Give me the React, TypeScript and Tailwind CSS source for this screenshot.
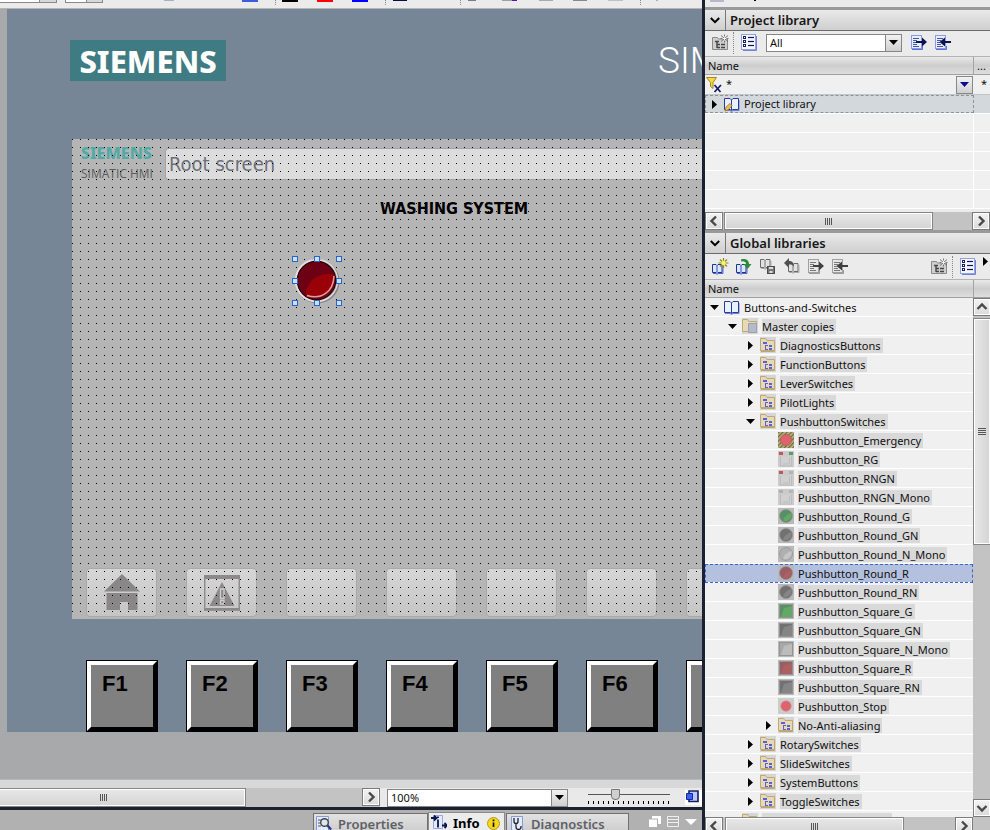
import type { ReactNode } from "react";

type Dir = "left" | "right" | "up" | "down";

function ChevronIcon({ dir }: { dir: Dir }) {
  const d = {
    left: "M10 3.500 5.500 8l4.500 4.500",
    right: "M6 3.500 10.500 8 6 12.500",
    up: "M3.500 10 8 5.500l4.500 4.500",
    down: "M3.500 6 8 10.500 12.500 6",
  }[dir];
  return (
    <svg viewBox="0 0 16 16" className="h-4 w-4" fill="none" stroke="#484848" strokeWidth="2.4">
      <path d={d} />
    </svg>
  );
}

function ScrollButton({ dir }: { dir: Dir }) {
  return (
    <button
      aria-label={`Scroll ${dir}`}
      className="flex h-[18px] w-[18px] shrink-0 items-center justify-center border border-[#7c7c7c] bg-gradient-to-b from-[#f4f4f4] to-[#dadada] shadow-[inset_0_0_0_1px_#fff]"
    >
      <ChevronIcon dir={dir} />
    </button>
  );
}

function Thumb({ className }: { className: string }) {
  return (
    <div
      className={`flex shrink-0 items-center justify-center gap-px border border-[#868686] bg-gradient-to-b from-[#e8e8e8] to-[#d4d4d4] shadow-[inset_0_0_0_1px_#fff] ${className}`}
    >
      {[0, 1, 2, 3].map((i) => (
        <span key={i} className="h-[7px] w-px bg-[#555]" />
      ))}
    </div>
  );
}

function Triangle({ dir, color = "#000" }: { dir: "right" | "down"; color?: string }) {
  return dir === "right" ? (
    <svg width="5" height="9" viewBox="0 0 5 9">
      <path d="M0 0l5 4.500-5 4.500z" fill={color} />
    </svg>
  ) : (
    <svg width="9" height="5" viewBox="0 0 9 5">
      <path d="M0 0h9L4.500 5z" fill={color} />
    </svg>
  );
}

function BookIcon({ children }: { children?: ReactNode }) {
  return (
    <svg width="16" height="16" viewBox="1 0 16 16">
      <path d="M2 14.500h5l1.500 1 1.500-1h6V4" fill="none" stroke="#6f84d6" />
      <path d="M1.500 2.500H7L8.500 4 10 2.500h5.500v11H10L8.500 14.500 7 13.500H1.500z" fill="#e8f1ff" stroke="#2a3a9c" />
      <path d="M8.500 4v10" stroke="#2a3a9c" />
      {children}
    </svg>
  );
}

function SmallBook({ gray, x = 1, y = 5 }: { gray?: boolean; x?: number; y?: number }) {
  return (
    <g transform={`translate(${x} ${y})`}>
      <path
        d="M.5 1.500H4L5 2.500 6 1.500h4v8H6l-1 1-1-1H.5z"
        fill={gray ? "#e2e2e2" : "#d8e8ff"}
        stroke={gray ? "#6a6a6a" : "#22308f"}
      />
      <path d="M5 2.500v7" stroke={gray ? "#777" : "#3b4bb0"} />
      <path d="M1 10.500h3l1 1 1-1h5V3" fill="none" stroke={gray ? "#aaa" : "#5566cc"} />
    </g>
  );
}

function NewFolderIcon() {
  return (
    <svg width="17" height="17" viewBox="0 0 17 17">
      <path d="M.5 15.500v-12h5l1 1.500h9v10.500z" fill="#cfcfcf" stroke="#8a8a8a" />
      <path d="M3 7.500h4M5 8v6M5 10.500h3M5 13.500h3M9 10.500h4M9 13.500h4" stroke="#444" strokeWidth="1.400" />
      <path d="M12.500.5v8M9 1.500l7 6M16 1.500l-7 6M8.500 4.500h8" stroke="#6b6b6b" strokeWidth=".9" />
      <path d="M12.500 2.500v4M10.500 4.500h4" stroke="#f4f4f4" />
    </svg>
  );
}

function ListIcon() {
  return (
    <svg width="16" height="17" viewBox="0 0 16 17">
      <rect x=".5" y=".5" width="14" height="15" fill="#f3f6ff" stroke="#93a2dc" />
      <path d="M2 16.500h13.500V2" fill="none" stroke="#6f83d8" />
      {[3, 7, 11].map((y) => (
        <g key={y}>
          <rect x="2.500" y={y - 0.5} width="2" height="2" fill="#fff" stroke="#1b1f5e" />
          <path d={`M7 ${y + 0.5}h6`} stroke="#10154e" strokeWidth="1.200" />
        </g>
      ))}
    </svg>
  );
}

function PageArrowIcon({ dir, gray }: { dir: "left" | "right"; gray?: boolean }) {
  const a = gray ? "#404040" : "#0c1450";
  return (
    <svg width="17" height="16" viewBox="0 0 17 16">
      <rect x="1.500" y=".5" width="10" height="13" fill={gray ? "#e6e6e6" : "#e6eeff"} stroke={gray ? "#a0a0a0" : "#8a9be0"} />
      <path d="M2 14.500h10.500V11" fill="none" stroke={gray ? "#999" : "#5d72d4"} />
      <path d="M3 3.500h6M3 5.500h4M3 7.500h3M3 9.500h4M3 11.500h6" stroke={gray ? "#777" : "#4553a8"} />
      {dir === "right" ? (
        <path d="M6 6h6V2.500L17 7l-5 4.500V8H6z" fill={a} />
      ) : (
        <path d="M17 6h-6V2.500L5.500 7l5.500 4.500V8h6z" fill={a} />
      )}
    </svg>
  );
}

function IconButton({ label, className = "", children }: { label: string; className?: string; children: ReactNode }) {
  return (
    <button aria-label={label} className={`shrink-0 ${className}`}>
      {children}
    </button>
  );
}

function SectionHeader({ title }: { title: string }) {
  return (
    <div className="flex h-6 shrink-0 items-center border-t-3 border-b border-t-[#9a9a9a] border-b-[#6c6c6c] bg-gradient-to-b from-[#e9e9e9] to-[#cfcfcf]">
      <button aria-label={`Collapse ${title}`} className="flex h-5 w-[21px] items-center justify-center border-r border-[#777]">
        <svg width="10" height="7" viewBox="0 0 10 7" fill="none" stroke="#000" strokeWidth="2">
          <path d="M.8 1 5 5.200 9.200 1" />
        </svg>
      </button>
      <h2 className="pl-1 text-[13px] leading-5 font-semibold text-[#161616]">{title}</h2>
    </div>
  );
}

function ColumnHeader({ more }: { more?: string }) {
  return (
    <div className="flex h-[19px] shrink-0 border-t border-b border-t-[#b4b4b4] border-b-[#a0a0a0] bg-gradient-to-b from-[#e9e9e9] via-[#cdcdcd] to-[#dedede] leading-[18px]">
      <span className="flex-1 border-r border-[#a4a4a4] pl-[3px]">Name</span>
      <span className="w-4 pl-[3px]">{more}</span>
    </div>
  );
}

function FolderIcon({ master }: { master?: boolean }) {
  return (
    <svg width="16" height="16" viewBox="0 0 16 16" className="bg-[#d6d6d6]">
      <path d="M.5 13.500V1.500h5l1.500 2h7.500v10z" fill="#e6d9b4" stroke="#bda878" />
      {master ? (
        <path d="M6.500 5.500h8v9h-8z" fill="#b5b9c8" stroke="#9aa0b4" />
      ) : (
        <>
          <path d="M14.500 4v10.500H1" fill="none" stroke="#bfa66a" />
          <path d="M3 5h4v2H3zM9 8h3v2H9zM9 11h3v2H9zM5 8h3v1H5zM5 8h1v5H5zM5 12h3v1H5z" fill="#5a5fe0" />
        </>
      )}
    </svg>
  );
}

type IconKind = "emergency" | "rg" | "rngn" | "mono" | "round" | "square" | "stop";

function SwitchIcon({ kind, a = "#777", b = "#999" }: { kind: IconKind; a?: string; b?: string }) {
  if (kind === "emergency")
    return (
      <svg width="16" height="16" viewBox="0 0 16 16">
        <defs>
          <pattern id="hazard" width="3" height="3" patternUnits="userSpaceOnUse" patternTransform="rotate(45)">
            <rect width="3" height="3" fill="#bdb87c" />
            <rect width="1.300" height="3" fill="#6c6a4c" />
          </pattern>
        </defs>
        <rect width="16" height="16" fill="url(#hazard)" />
        <circle cx="8" cy="8" r="5.500" fill="#e0626c" stroke="#b8625c" />
      </svg>
    );
  if (kind === "stop")
    return (
      <svg width="16" height="16" viewBox="0 0 16 16">
        <rect width="16" height="16" fill="#cccccc" />
        <circle cx="8" cy="8" r="5.300" fill="#e0626c" stroke="#c8a0a2" strokeWidth=".6" />
      </svg>
    );
  if (kind === "round")
    return (
      <svg width="16" height="16" viewBox="0 0 16 16">
        <rect width="16" height="16" fill="#b9b9b9" />
        <circle cx="8" cy="8" r="6.500" fill={a} stroke="#959595" strokeWidth=".8" />
        <path d="M13.500 5c1 5-3 9-8 8-1-3 4-7 8-8z" fill={b} />
      </svg>
    );
  if (kind === "square")
    return (
      <svg width="16" height="16" viewBox="0 0 16 16">
        <rect width="16" height="16" fill="#b9b9b9" />
        <rect x="1.500" y="1.500" width="13" height="13" fill={a} stroke="#949494" />
        <path d="M6 5l8-2v11H3z" fill={b} />
      </svg>
    );
  return (
    <svg width="16" height="16" viewBox="0 0 16 16">
      <rect width="16" height="16" fill="#cbcbcb" />
      <path d="M2.500 5.500v9.500h11V5.500" fill="#d0d0d0" stroke="#bcbcbc" />
      <path d="M11.500 7v6H5" fill="none" stroke="#bdbdbd" />
      <rect x="1" y="1" width="4" height="3" fill={kind === "mono" ? "#aeaeae" : "#c2555c"} />
      <rect x="11" y="1" width="4" height="3" fill={kind === "rg" ? "#5a9e60" : "#b4b4b4"} />
    </svg>
  );
}

type Node = { level: number; label: string; icon: ReactNode; open?: boolean; selected?: boolean; plain?: boolean };

const folder = <FolderIcon />;
const tree: Node[] = [
  { level: 0, label: "Buttons-and-Switches", icon: <BookIcon />, open: true, plain: true },
  { level: 1, label: "Master copies", icon: <FolderIcon master />, open: true },
  { level: 2, label: "DiagnosticsButtons", icon: folder, open: false },
  { level: 2, label: "FunctionButtons", icon: folder, open: false },
  { level: 2, label: "LeverSwitches", icon: folder, open: false },
  { level: 2, label: "PilotLights", icon: folder, open: false },
  { level: 2, label: "PushbuttonSwitches", icon: folder, open: true },
  { level: 3, label: "Pushbutton_Emergency", icon: <SwitchIcon kind="emergency" /> },
  { level: 3, label: "Pushbutton_RG", icon: <SwitchIcon kind="rg" /> },
  { level: 3, label: "Pushbutton_RNGN", icon: <SwitchIcon kind="rngn" /> },
  { level: 3, label: "Pushbutton_RNGN_Mono", icon: <SwitchIcon kind="mono" /> },
  { level: 3, label: "Pushbutton_Round_G", icon: <SwitchIcon kind="round" a="#588f66" b="#63a965" /> },
  { level: 3, label: "Pushbutton_Round_GN", icon: <SwitchIcon kind="round" a="#717171" b="#858585" /> },
  { level: 3, label: "Pushbutton_Round_N_Mono", icon: <SwitchIcon kind="round" a="#b0b0b0" b="#c6c6c6" /> },
  { level: 3, label: "Pushbutton_Round_R", icon: <SwitchIcon kind="round" a="#9a5c66" b="#ab6062" />, selected: true },
  { level: 3, label: "Pushbutton_Round_RN", icon: <SwitchIcon kind="round" a="#717171" b="#858585" /> },
  { level: 3, label: "Pushbutton_Square_G", icon: <SwitchIcon kind="square" a="#588f66" b="#63a965" /> },
  { level: 3, label: "Pushbutton_Square_GN", icon: <SwitchIcon kind="square" a="#717171" b="#858585" /> },
  { level: 3, label: "Pushbutton_Square_N_Mono", icon: <SwitchIcon kind="square" a="#a8a8a8" b="#bcbcbc" /> },
  { level: 3, label: "Pushbutton_Square_R", icon: <SwitchIcon kind="square" a="#9a5c66" b="#ab6062" /> },
  { level: 3, label: "Pushbutton_Square_RN", icon: <SwitchIcon kind="square" a="#717171" b="#858585" /> },
  { level: 3, label: "Pushbutton_Stop", icon: <SwitchIcon kind="stop" /> },
  { level: 3, label: "No-Anti-aliasing", icon: folder, open: false },
  { level: 2, label: "RotarySwitches", icon: folder, open: false },
  { level: 2, label: "SlideSwitches", icon: folder, open: false },
  { level: 2, label: "SystemButtons", icon: folder, open: false },
  { level: 2, label: "ToggleSwitches", icon: folder, open: false },
];

const indent = ["pl-0", "pl-[18px]", "pl-[36px]", "pl-[54px]"];

function TreeRow({ node }: { node: Node }) {
  return (
    <li
      role="treeitem"
      aria-selected={!!node.selected}
      className={`flex h-[19px] items-center border-b border-white ${node.selected ? "bg-[#b4c1de] outline-1 -outline-offset-1 outline-dashed outline-[#3b66c8]" : ""} ${indent[node.level]}`}
    >
      {node.open === undefined ? (
        <span className="w-[19px] shrink-0" />
      ) : (
        <button aria-label={`Toggle ${node.label}`} className="flex w-[19px] shrink-0 justify-center">
          <Triangle dir={node.open ? "down" : "right"} />
        </button>
      )}
      <span className="w-4 shrink-0">{node.icon}</span>
      <span className={`ml-1 pr-0.5 leading-[15px] whitespace-nowrap ${node.plain || node.selected ? "" : "bg-[#d9d9d9]"}`}>{node.label}</span>
    </li>
  );
}

function ProjectLibrary() {
  return (
    <section className="flex shrink-0 flex-col">
      <SectionHeader title="Project library" />
      <div className="flex h-[25px] shrink-0 items-center bg-[#ebebeb] pb-0.5 pl-[7px]">
        <IconButton label="Add new folder"><NewFolderIcon /></IconButton>
        <span className="mx-1 h-[22px] border-l border-dotted border-[#888]" />
        <IconButton label="Show list" className="ml-[3px]"><ListIcon /></IconButton>
        <div className="relative ml-[9px] h-[18px] w-[136px]">
          <select aria-label="Filter types" className="block h-[18px] w-full appearance-none border border-[#868686] bg-white pl-[3px] text-[11px] leading-4">
            <option>All</option>
          </select>
          <span className="pointer-events-none absolute inset-y-px right-px flex w-4 items-center justify-center border-l border-[#868686] bg-gradient-to-b from-[#f2f2f2] to-[#cfcfcf]">
            <Triangle dir="down" />
          </span>
        </div>
        <IconButton label="Export" className="ml-2"><PageArrowIcon dir="right" /></IconButton>
        <IconButton label="Import" className="ml-[7px]"><PageArrowIcon dir="left" /></IconButton>
      </div>
      <ColumnHeader more="..." />
      <div className="flex h-5 items-center border-b border-[#c4c4c4] bg-[#f0f0f0]">
        <svg width="18" height="18" viewBox="0 0 18 18" className="ml-px">
          <path d="M.5 1.500h10L7 6.500v6l-2.500-2v-4z" fill="#f2d94a" stroke="#a58a1c" />
          <path d="M8.500 9l6 7M15 9l-6.500 7" stroke="#141a6c" strokeWidth="1.700" />
        </svg>
        <input aria-label="Filter by name" defaultValue="*" className="ml-0.5 h-4 w-10 bg-transparent text-[11px] outline-none" />
        <button aria-label="Filter options" className="ml-auto flex h-[18px] w-[17px] items-center justify-center border border-[#888] bg-gradient-to-b from-[#f2f2f2] to-[#cfcfcf]">
          <Triangle dir="down" color="#0a0a96" />
        </button>
        <span className="w-[17px] pl-2">*</span>
      </div>
      <div className="flex h-[19px] border-b border-white bg-[#d2d8dc]">
        <div className="flex flex-1 items-center border border-dashed border-[#8c9298]">
          <button aria-label="Toggle Project library" className="flex w-4 shrink-0 justify-center">
            <Triangle dir="right" />
          </button>
          <span className="ml-0.5 w-4">
            <BookIcon>
              <path d="M2 15l1-4L7 7.500l2 2L5 14z" fill="#e8c35a" stroke="#a0701c" strokeWidth=".8" />
            </BookIcon>
          </span>
          <span className="ml-1">Project library</span>
        </div>
        <span className="w-4" />
      </div>
      {[0, 1, 2, 3, 4].map((i) => (
        <div key={i} className="flex h-[19px] border-b border-white bg-[#f0f0f0]">
          <span className="flex-1 border-r border-white" />
          <span className="w-4" />
        </div>
      ))}
      <div className="mt-[3px] flex h-[18px] bg-[#c3c3c3]">
        <ScrollButton dir="left" />
        <Thumb className="ml-px h-[18px] w-[209px]" />
        <span className="flex-1" />
        <ScrollButton dir="right" />
      </div>
    </section>
  );
}

function GlobalLibraries() {
  return (
    <section className="flex min-h-0 flex-1 flex-col">
      <SectionHeader title="Global libraries" />
      <div className="flex h-[25px] shrink-0 items-center bg-[#ebebeb] pl-1.5">
        <IconButton label="Create new global library">
          <svg width="18" height="17" viewBox="0 0 18 17">
            <SmallBook />
            <path d="M12.500 0v10M7.500 5h10M9 1.500l7 7M16 1.500l-7 7" stroke="#8a8a20" strokeWidth="1.200" />
            <circle cx="12.500" cy="5" r="2.200" fill="#fff45a" />
          </svg>
        </IconButton>
        <IconButton label="Open global library" className="ml-1.5">
          <svg width="18" height="17" viewBox="0 0 18 17">
            <SmallBook />
            <path d="M6 1.500c5-1.500 8 1 8 4.500h2.500L12.500 11 8.500 6H11c0-2-2-3-5-2.500z" fill="#2c8a3a" />
          </svg>
        </IconButton>
        <IconButton label="Save library" className="ml-1.5">
          <svg width="18" height="17" viewBox="0 0 18 17">
            <SmallBook gray x={1} y={0} />
            <rect x="8.500" y="8.500" width="7" height="7" fill="#777" stroke="#4c4c4c" />
            <path d="M10 9h4v2h-4zM10.500 13h3v2h-3z" fill="#ddd" />
          </svg>
        </IconButton>
        <IconButton label="Undo" className="ml-1.5">
          <svg width="18" height="17" viewBox="0 0 18 17">
            <SmallBook gray x={5} y={4} />
            <path d="M1 5l5-5v3c4 0 5 2.500 5 6-1-2-2-2.500-5-2.500V10z" fill="#505050" />
          </svg>
        </IconButton>
        <IconButton label="Export" className="ml-1.5"><PageArrowIcon dir="right" gray /></IconButton>
        <IconButton label="Import" className="ml-[7px]"><PageArrowIcon dir="left" gray /></IconButton>
        <IconButton label="Add new folder" className="ml-auto"><NewFolderIcon /></IconButton>
        <span className="ml-1 h-[22px] border-l border-dotted border-[#888]" />
        <IconButton label="Show list" className="ml-[7px]"><ListIcon /></IconButton>
        <span className="mb-2.5 ml-[7px] w-[7px]"><Triangle dir="right" /></span>
      </div>
      <ColumnHeader />
      <div className="flex min-h-0 flex-1">
        <div className="flex min-w-0 flex-1 flex-col bg-[#f0f0f0]">
          <ul role="tree" className="min-h-0 flex-1 overflow-hidden">
            {tree.map((n) => (
              <TreeRow key={n.label} node={n} />
            ))}
            <li className="flex h-[19px] gap-1 pt-0.5 pl-[37px]" aria-hidden="true">
              <FolderIcon />
              <span className="h-4 w-[130px] bg-[#d9d9d9]" />
            </li>
          </ul>
          <div className="flex h-[13px] shrink-0 overflow-hidden bg-[#c3c3c3]">
            <ScrollButton dir="left" />
            <Thumb className="ml-0.5 h-[18px] w-[179px]" />
            <span className="flex-1" />
            <ScrollButton dir="right" />
          </div>
        </div>
        <div className="flex w-[17px] shrink-0 flex-col overflow-hidden bg-[#c3c3c3]">
          <ScrollButton dir="up" />
          <div className="mt-0.5 flex h-[227px] w-[18px] shrink-0 flex-col items-center justify-center gap-px border border-[#868686] bg-gradient-to-r from-[#e8e8e8] to-[#d4d4d4] shadow-[inset_0_0_0_1px_#fff]">
            {[0, 1, 2, 3].map((i) => (
              <span key={i} className="h-px w-2 bg-[#555]" />
            ))}
          </div>
          <span className="flex-1" />
          <ScrollButton dir="down" />
          <span className="h-[13px] shrink-0" />
        </div>
      </div>
    </section>
  );
}

function TopToolbar() {
  const sep = "h-[5px] border-l border-dotted border-[#888]";
  return (
    <div className="flex h-[9px] shrink-0 items-start overflow-hidden border-b border-[#b5b5b5] bg-[#ebebeb]">
      <span className="h-[3px] w-10 border-r border-b border-[#8a8a8a] bg-white" />
      <span className="h-[3px] w-[17px] border-r border-b border-[#8a8a8a] bg-[#d8d8d8]" />
      <span className="ml-2 h-[3px] w-[22px] border-x border-b border-[#8a8a8a] bg-white" />
      <span className="h-[3px] w-4 border-r border-b border-[#8a8a8a] bg-[#d8d8d8]" />
      <span className="ml-[61px] h-px w-2.5 bg-[#aab0c2]" />
      <span className="ml-[68px] h-0.5 w-4 bg-[#3c5be0]" />
      <span className={`ml-[17px] ${sep}`} />
      <span className="ml-1.5 h-0.5 w-4 bg-black" />
      <span className="ml-[19px] h-0.5 w-4 bg-[#ff0000]" />
      <span className="ml-[19px] h-0.5 w-4 bg-[#0000ff]" />
      <span className={`ml-[17px] ${sep}`} />
      <span className="ml-[7px] h-px w-3.5 bg-[#0a0a4c]" />
      <span className={`ml-[53px] ${sep}`} />
      <span className="ml-[7px] h-px w-2 bg-[#777b8c]" />
      <span className="ml-[26px] h-px w-2.5 bg-[#a0a0a0]" />
      <span className="h-px w-[5px] bg-[#5a14a8]" />
      <span className="ml-[22px] h-px w-3.5 bg-[#aaa]" />
      <span className="ml-5 h-px w-3.5 bg-[#888]" />
      <span className="ml-[21px] h-px w-[15px] bg-[#c0c0c0]" />
      <span className={`ml-[17px] ${sep}`} />
      <span className="ml-[15px] h-px w-0.5 bg-[#aab0c2]" />
    </div>
  );
}

function HomeIcon() {
  return (
    <svg width="36" height="38" viewBox="0 0 36 38" fill="#898787">
      <path d="M18 0l18 17.500H0zM2.500 19h31v17h-9.500V28H16v8H2.500z" />
    </svg>
  );
}

function AlarmIcon() {
  return (
    <svg width="36" height="36" viewBox="0 0 36 36">
      <rect x=".75" y="1" width="34.500" height="34" fill="none" stroke="#8f8d8d" strokeWidth="1.500" />
      <rect width="36" height="4" fill="#8b8989" />
      <rect y="33" width="36" height="2.500" fill="#8b8989" />
      <path d="M18 7l12.500 24h-25z" fill="#8b8989" />
      <path d="M16.500 14h3.500v9.500h-3.500zM16.500 25.500h3.500v3.500h-3.500z" fill="#8b8989" stroke="#cfcdcd" strokeWidth="1.300" />
    </svg>
  );
}

const handles = [
  "left-0 top-0",
  "left-[22px] top-0",
  "left-[44px] top-0",
  "left-0 top-[22px]",
  "left-[44px] top-[22px]",
  "left-0 top-[44px]",
  "left-[22px] top-[44px]",
  "left-[44px] top-[44px]",
];

function RoundPushbutton() {
  return (
    <div className="absolute top-[117px] left-[220px] h-[50px] w-[50px]">
      <button aria-label="Red pushbutton" className="absolute top-0.5 left-0.5">
        <svg width="46" height="46" viewBox="0 0 46 46">
          <circle cx="23.500" cy="23.500" r="22" fill="#858585" />
          <circle cx="22.500" cy="22.500" r="21.800" fill="#e0e0e0" />
          <circle cx="23" cy="22.500" r="20" fill="#9a9a9a" />
          <circle cx="22.500" cy="22.500" r="19.200" fill="#6e0015" stroke="#2a0008" strokeWidth="1.200" />
          <path d="M12 38.500C11 26 22 13 40 16.500 43 32 29 45 12 38.500z" fill="#990008" />
          <path d="M13 37.500C27 42 39.500 34 40 18" fill="none" stroke="#d9a0a4" strokeWidth="1.500" />
        </svg>
      </button>
      {handles.map((p) => (
        <span key={p} className={`absolute h-1.5 w-1.5 border border-[#2f62c4] bg-[#c4e2f6] ${p}`} />
      ))}
    </div>
  );
}

const softKeys: ReactNode[] = [<HomeIcon />, <AlarmIcon />, null, null, null, null, null];
const functionKeys = ["F1", "F2", "F3", "F4", "F5", "F6", "F7"];

function Screen() {
  return (
    <div className="relative ml-[65px] flex h-[480px] flex-col overflow-hidden bg-[#b5b5b5] font-['DejaVu_Sans_Condensed','DejaVu_Sans',sans-serif]">
      <div className="flex pt-[9px] pl-[9px]">
        <div className="w-[84px] whitespace-nowrap">
          <div className="font-['Noto_Sans',sans-serif] text-[16px] leading-[10px] font-extrabold text-[#52a9a6]">SIEMENS</div>
          <div className="mt-2 font-['Open_Sans',sans-serif] text-[12px] leading-4 text-[#5c5c5c]">SIMATIC HMI</div>
        </div>
        <div className="flex h-8 flex-1 items-center rounded-l-sm border border-r-0 border-[#a2a4aa] bg-[#dcdcdc] pl-[3px] text-[20px] text-[#6d7079]">
          Root screen
        </div>
      </div>
      <div className="absolute top-[58px] left-[308px] text-[16px] leading-6 font-bold whitespace-nowrap text-black">WASHING SYSTEM</div>
      <div className="mt-auto mb-0.5 flex gap-[29px] pl-[14px]">
        {softKeys.map((icon, i) => (
          <button
            key={i}
            aria-label={`Soft key ${i + 1}`}
            className="flex h-[49px] w-[71px] shrink-0 items-center justify-center rounded-sm border border-[#a9a9ab] bg-gradient-to-b from-[#d6d6d6] to-[#c6c5c5]"
          >
            {icon}
          </button>
        ))}
      </div>
      <div className="pointer-events-none absolute inset-0 bg-[conic-gradient(from_270deg_at_1px_1px,#000_90deg,transparent_0)] bg-[length:8px_8px]" />
      <RoundPushbutton />
    </div>
  );
}

function Tab({ active, label, icon, className, children }: { active?: boolean; label: string; icon: ReactNode; className: string; children?: ReactNode }) {
  return (
    <button
      role="tab"
      aria-selected={!!active}
      className={`flex shrink-0 items-start overflow-hidden border-x border-t pt-px text-[13px] leading-[18px] ${
        active
          ? "h-[18px] border-[#8a8a8a] bg-[#ececec] font-bold text-black"
          : "h-[17px] border-[#707070] bg-gradient-to-b from-[#e2e2e2] to-[#cfcfcf] font-semibold text-[#5e6166]"
      } ${className}`}
    >
      {icon}
      <span>{label}</span>
      {children}
    </button>
  );
}

function Editor() {
  return (
    <div className="flex min-w-0 flex-1 flex-col overflow-hidden">
      <TopToolbar />
      <main className="flex min-h-0 flex-1 flex-col overflow-hidden border-b border-[#b8b8ba] bg-[#a8a9ab] pl-[7px]">
        <div className="flex flex-col bg-[#768696]">
          <div className="flex h-[72px] items-end overflow-hidden pl-[63px]">
            <div className="flex h-[41px] w-[156px] shrink-0 items-center justify-center bg-[#3e7b82] font-['Noto_Sans',sans-serif] text-[31px] leading-10 font-extrabold text-white">
              SIEMENS
            </div>
            <div className="ml-[432px] min-w-0 flex-1 overflow-hidden font-['Roboto',sans-serif] text-[37px] leading-10 font-light text-white">SIM</div>
          </div>
          <div className="h-[58px]" />
          <Screen />
          <div className="mt-[41px] flex gap-7 pl-[79px]">
            {functionKeys.map((k) => (
              <button
                key={k}
                className="h-[72px] w-[72px] shrink-0 border border-black bg-black font-['Liberation_Sans',Arial,sans-serif] text-[22px] leading-6 font-bold text-black"
              >
                <span className="block h-[70px] border-4 border-t-white border-r-black border-b-black border-l-white bg-[#808080] pt-[7px] pl-[11px] text-left">
                  {k}
                </span>
              </button>
            ))}
          </div>
        </div>
      </main>
      <div className="h-2 shrink-0 bg-[#d8d8d8]" />
      <div className="flex h-[19px] shrink-0 items-center bg-[#e9e9e9]">
        <div className="flex h-full flex-1 bg-[#c3c3c3]">
          <div className="h-full w-[246px] shrink-0 overflow-hidden">
            <Thumb className="-ml-10 h-[19px] w-[286px]" />
          </div>
          <span className="flex-1" />
          <ScrollButton dir="right" />
        </div>
        <div className="relative ml-[7px] h-[18px] w-[181px]">
          <select aria-label="Zoom" className="block h-[18px] w-full appearance-none border border-[#868686] bg-white pl-[3px] text-[11px] leading-4">
            <option>100%</option>
          </select>
          <span className="pointer-events-none absolute inset-y-px right-px flex w-4 items-center justify-center border-l border-[#868686] bg-gradient-to-b from-[#f2f2f2] to-[#cfcfcf]">
            <Triangle dir="down" />
          </span>
        </div>
        <div className="ml-5 flex h-[17px] w-[82px] flex-col">
          <input
            type="range"
            aria-label="Zoom level"
            defaultValue={31}
            className="h-[11px] w-full appearance-none bg-[linear-gradient(#555,#555)] bg-[length:100%_1px] bg-center bg-no-repeat [&::-webkit-slider-thumb]:h-[11px] [&::-webkit-slider-thumb]:w-[9px] [&::-webkit-slider-thumb]:appearance-none [&::-webkit-slider-thumb]:rounded-b-sm [&::-webkit-slider-thumb]:border [&::-webkit-slider-thumb]:border-[#777] [&::-webkit-slider-thumb]:bg-[#cfcfcf]"
          />
          <div className="mt-px h-[3px] bg-[repeating-linear-gradient(90deg,#000_0_1px,transparent_1px_5px)]" />
        </div>
        <button aria-label="Fit to window" className="ml-[15px] bg-white pr-[3px]">
          <svg width="14" height="15" viewBox="0 0 14 15">
            <path d="M4 1h9v10.500H4z" fill="#b9c9ff" stroke="#14205e" strokeWidth="1.600" />
            <path d="M1.500 3.500h6v6h-6z" fill="#3c63f0" stroke="#142a9a" />
          </svg>
        </button>
      </div>
      <div className="h-[3px] shrink-0 bg-[#1b2130]" />
      <div role="tablist" className="flex h-5 shrink-0 items-end bg-[#b1b1b1] pr-[5px] pl-[313px]">
        <Tab
          label="Properties"
          className="w-[115px] gap-1.5 pl-0.5"
          icon={
            <svg width="16" height="15" viewBox="0 0 16 15" className="mt-px shrink-0">
              <path d="M.5.500h12v14H.5z" fill="#e2eaff" stroke="#8a9ad8" />
              <path d="M2 4h3M2 7h3M2 10h3" stroke="#555" />
              <circle cx="8.500" cy="6.500" r="3.800" fill="#dfe6ee" stroke="#444" strokeWidth="1.400" />
              <path d="M11.500 9.500l3.500 4" stroke="#2a3c80" strokeWidth="2.400" />
            </svg>
          }
        />
        <Tab
          active
          label="Info"
          className="w-[77px] gap-1.5 pl-0.5"
          icon={
            <svg width="16" height="15" viewBox="0 0 16 15" className="mt-px shrink-0">
              <path d="M2.500.500h9v13h-9z" fill="#e2eaff" stroke="#9aa8dc" />
              <path d="M0 3h5M3 .5 5.500 3 3 5.500M7 4.500v8M7 1.500V3M11 10.500h5M13.500 8l2.500 2.500-2.500 2.500" fill="none" stroke="#0c1450" strokeWidth="1.800" />
            </svg>
          }
        >
          <svg width="13" height="13" viewBox="0 0 13 13" className="mt-[3px] ml-px shrink-0">
            <circle cx="6.500" cy="6.500" r="6" fill="#f7d71c" stroke="#b99a10" />
            <path d="M6.500 5.500v4.500M6.500 2.500v1.700" stroke="#111" strokeWidth="1.700" />
          </svg>
        </Tab>
        <Tab
          label="Diagnostics"
          className="ml-px w-[123px] gap-1.5 pl-1"
          icon={
            <svg width="14" height="15" viewBox="0 0 14 15" className="mt-px shrink-0">
              <path d="M.5.500h11v14H.5z" fill="#e2eaff" stroke="#8a9ad8" />
              <path d="M3 2v3.500a2 2 0 0 0 4 0V2M5 8v3a2.500 2.500 0 0 0 5 0v-1" fill="none" stroke="#222" strokeWidth="1.300" />
            </svg>
          }
        />
        <div className="mb-[3px] ml-auto flex items-center gap-1.5 leading-none">
          <button aria-label="Float window">
            <svg width="12" height="11" viewBox="0 0 12 11" fill="#fff">
              <path d="M3 0h9v8H9V2.500H3z" />
              <path d="M0 3.500h8V11H0z" />
            </svg>
          </button>
          <button aria-label="Tile window">
            <svg width="12" height="11" viewBox="0 0 12 11">
              <path d="M.5.500h11v10H.5zM1 3.500h10M1 6.500h10" fill="none" stroke="#efefef" />
            </svg>
          </button>
          <button aria-label="Minimize">
            <svg width="12" height="11" viewBox="0 0 12 11" fill="#fff">
              <path d="M0 3h12L6 9z" />
            </svg>
          </button>
        </div>
      </div>
    </div>
  );
}

export default function App() {
  return (
    <div className="flex h-screen overflow-hidden bg-[#ebebeb] font-['Noto_Sans','Open_Sans',sans-serif] text-[11px] text-[#101010]">
      <Editor />
      <div className="w-[3px] shrink-0 bg-[#1b2130]" />
      <aside className="flex w-[285px] shrink-0 flex-col overflow-hidden">
        <div className="flex h-[7px] shrink-0 items-start gap-[22px] bg-[#ebebeb] pl-[5px]">
          <span className="h-0.5 w-3.5 bg-[#b4b8c8]" />
          <span className="ml-2 h-px w-0.5 bg-black" />
        </div>
        <ProjectLibrary />
        <GlobalLibraries />
      </aside>
    </div>
  );
}
